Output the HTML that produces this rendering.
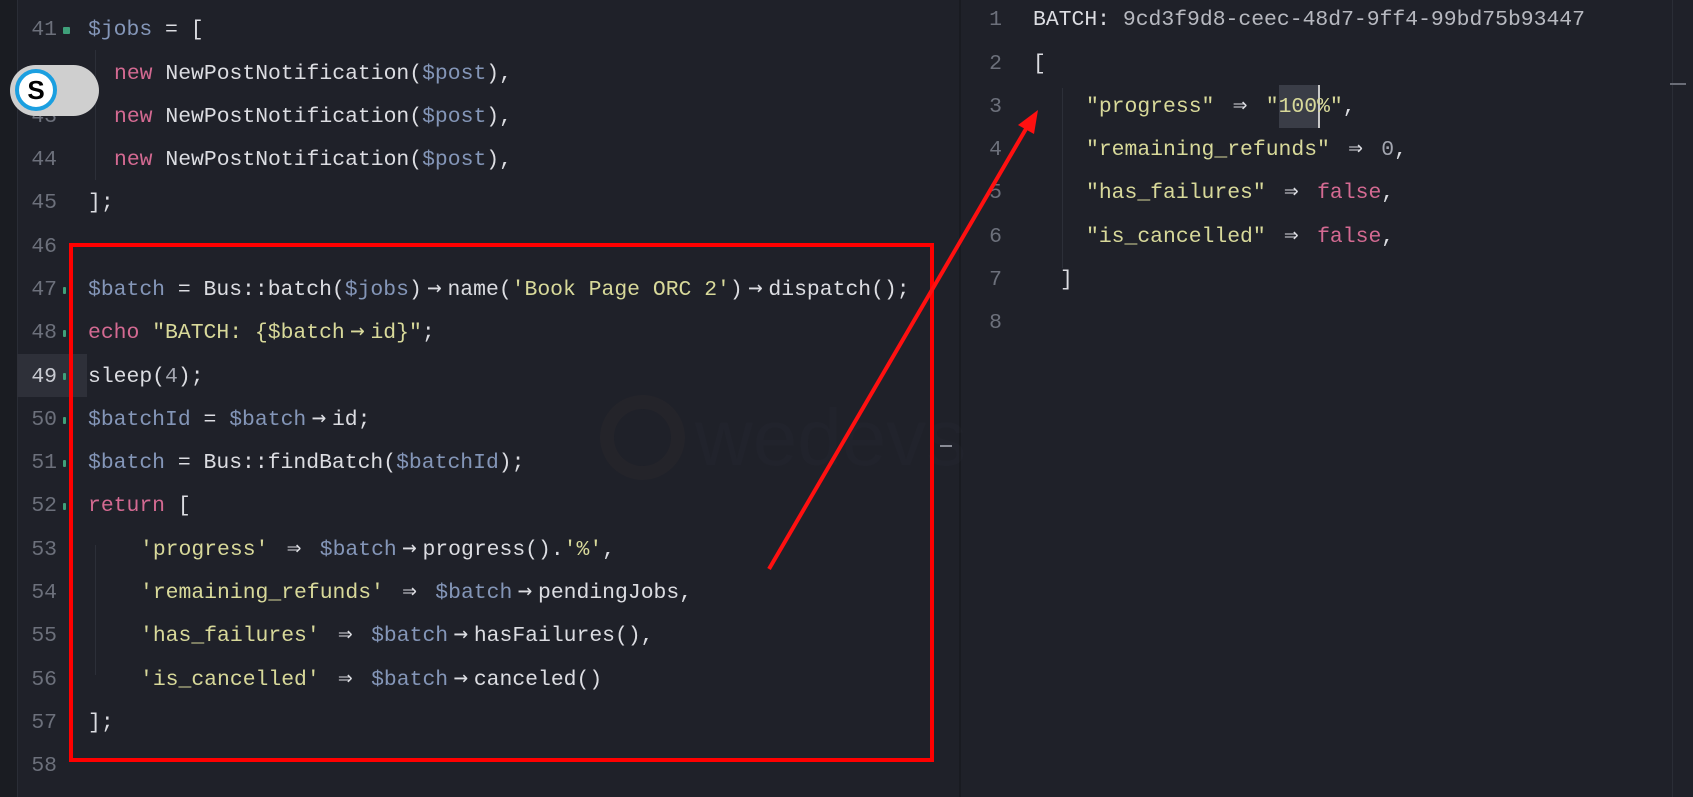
<!DOCTYPE html>
<html><head><meta charset="utf-8"><style>
html,body{margin:0;padding:0;width:1693px;height:797px;overflow:hidden;background:#1f2129;}
body{position:relative;font-family:"Liberation Mono","DejaVu Sans Mono",monospace;font-size:21.4px;color:#dcdde2;}
.strip{position:absolute;left:0;top:0;width:17px;height:797px;background:#1a1c22;border-right:1px solid #2a2d36;}
.pane{position:absolute;top:0;}
.ln{position:absolute;height:43.3px;line-height:43.3px;white-space:pre;}
.num{color:#6c707b;text-align:right;width:40px;}
.v{color:#8496b8}.s{color:#d8d99a}.k{color:#d46a92}.n{color:#a3a6b0}
.a{display:inline-block;width:25.7px;text-align:center;font-family:"DejaVu Sans Mono",monospace;font-size:24px;line-height:20px;}
.g{position:absolute;width:5px;height:7px;background:#3fa07a;border-radius:1px;}
.guide{position:absolute;width:1px;background:#2c2f38;}
</style></head><body>
<div class="strip"></div>
<div style="position:absolute;left:17px;top:354px;width:70px;height:43px;background:#2e3039;"></div>
<div style="position:absolute;left:959px;top:0;width:2px;height:797px;background:#191b21;"></div>
<div style="position:absolute;left:1672px;top:0;width:1px;height:797px;background:#2a2d36;"></div>
<div style="position:absolute;left:1670px;top:83px;width:16px;height:2px;background:#6a6d77;"></div>
<div style="position:absolute;left:940px;top:445px;width:12px;height:2px;background:#8a8d97;"></div>
<div style="position:absolute;left:600px;top:395px;width:85px;height:85px;border-radius:50%;border:14px solid rgba(120,80,70,0.06);box-sizing:border-box;"></div>
<div style="position:absolute;left:695px;top:392px;font-family:'Liberation Sans',sans-serif;font-size:80px;color:rgba(120,110,140,0.035);">wedevs</div>

<div class="guide" style="left:95px;top:50px;height:130px;"></div>
<div class="guide" style="left:95px;top:545px;height:130px;"></div>

<div class="pane" style="left:0;top:9.4px;">
<div class="ln num" style="left:17px;top:0">41</div>
<div class="ln num" style="left:17px;top:43.3px">42</div>
<div class="ln num" style="left:17px;top:86.6px">43</div>
<div class="ln num" style="left:17px;top:130px">44</div>
<div class="ln num" style="left:17px;top:173px">45</div>
<div class="ln num" style="left:17px;top:216.5px">46</div>
<div class="ln num" style="left:17px;top:260px">47</div>
<div class="ln num" style="left:17px;top:303px">48</div>
<div class="ln num" style="left:17px;top:346.5px;color:#c9cbd2">49</div>
<div class="ln num" style="left:17px;top:390px">50</div>
<div class="ln num" style="left:17px;top:433px">51</div>
<div class="ln num" style="left:17px;top:476px">52</div>
<div class="ln num" style="left:17px;top:519.5px">53</div>
<div class="ln num" style="left:17px;top:563px">54</div>
<div class="ln num" style="left:17px;top:606px">55</div>
<div class="ln num" style="left:17px;top:649.5px">56</div>
<div class="ln num" style="left:17px;top:693px">57</div>
<div class="ln num" style="left:17px;top:736px">58</div>

<div class="g" style="left:63px;top:18px;width:7px;height:7px;"></div>
<div class="g" style="left:63px;top:278px;width:3px;"></div>
<div class="g" style="left:63px;top:321px;width:3px;"></div>
<div class="g" style="left:63px;top:364px;width:3px;"></div>
<div class="g" style="left:63px;top:408px;width:3px;"></div>
<div class="g" style="left:63px;top:451px;width:3px;"></div>
<div class="g" style="left:63px;top:494px;width:3px;"></div>

<div class="ln" style="left:88px;top:0"><span class="v">$jobs</span> = [</div>
<div class="ln" style="left:114px;top:43.3px"><span class="k">new</span> NewPostNotification(<span class="v">$post</span>),</div>
<div class="ln" style="left:114px;top:86.6px"><span class="k">new</span> NewPostNotification(<span class="v">$post</span>),</div>
<div class="ln" style="left:114px;top:130px"><span class="k">new</span> NewPostNotification(<span class="v">$post</span>),</div>
<div class="ln" style="left:88px;top:173px">];</div>
<div class="ln" style="left:88px;top:260px"><span class="v">$batch</span> = Bus::batch(<span class="v">$jobs</span>)<span class="a">→</span>name(<span class="s">'Book Page ORC 2'</span>)<span class="a">→</span>dispatch();</div>
<div class="ln" style="left:88px;top:303px"><span class="k">echo</span> <span class="s">"BATCH: {$batch<span class="a">→</span>id}"</span>;</div>
<div class="ln" style="left:88px;top:346.5px">sleep(<span class="n">4</span>);</div>
<div class="ln" style="left:88px;top:390px"><span class="v">$batchId</span> = <span class="v">$batch</span><span class="a">→</span>id;</div>
<div class="ln" style="left:88px;top:433px"><span class="v">$batch</span> = Bus::findBatch(<span class="v">$batchId</span>);</div>
<div class="ln" style="left:88px;top:476px"><span class="k">return</span> [</div>
<div class="ln" style="left:140px;top:519.5px"><span class="s">'progress'</span> <span class="a">⇒</span> <span class="v">$batch</span><span class="a">→</span>progress().<span class="s">'%'</span>,</div>
<div class="ln" style="left:140px;top:563px"><span class="s">'remaining_refunds'</span> <span class="a">⇒</span> <span class="v">$batch</span><span class="a">→</span>pendingJobs,</div>
<div class="ln" style="left:140px;top:606px"><span class="s">'has_failures'</span> <span class="a">⇒</span> <span class="v">$batch</span><span class="a">→</span>hasFailures(),</div>
<div class="ln" style="left:140px;top:649.5px"><span class="s">'is_cancelled'</span> <span class="a">⇒</span> <span class="v">$batch</span><span class="a">→</span>canceled()</div>
<div class="ln" style="left:88px;top:693px">];</div>
</div>

<div class="guide" style="left:1062px;top:88px;height:180px;"></div>
<div style="position:absolute;left:1279px;top:85px;width:41px;height:43px;background:#3a3d47;"></div>
<div style="position:absolute;left:1318px;top:85px;width:2px;height:43px;background:#c8c8c8;"></div>
<div class="pane" style="left:0;top:-0.6px;">
<div class="ln num" style="left:962px;top:0">1</div>
<div class="ln num" style="left:962px;top:43.3px">2</div>
<div class="ln num" style="left:962px;top:86.6px">3</div>
<div class="ln num" style="left:962px;top:130px">4</div>
<div class="ln num" style="left:962px;top:173px">5</div>
<div class="ln num" style="left:962px;top:216.5px">6</div>
<div class="ln num" style="left:962px;top:260px">7</div>
<div class="ln num" style="left:962px;top:303px">8</div>
<div class="ln" style="left:1033px;top:0">BATCH: <span style="color:#b7b9c0">9cd3f9d8-ceec-48d7-9ff4-99bd75b93447</span></div>
<div class="ln" style="left:1033px;top:43.3px">[</div>
<div class="ln" style="left:1086px;top:86.6px"><span class="s">"progress"</span> <span class="a">⇒</span> <span class="s">"100%"</span>,</div>
<div class="ln" style="left:1086px;top:130px"><span class="s">"remaining_refunds"</span> <span class="a">⇒</span> <span class="n">0</span>,</div>
<div class="ln" style="left:1086px;top:173px"><span class="s">"has_failures"</span> <span class="a">⇒</span> <span class="k">false</span>,</div>
<div class="ln" style="left:1086px;top:216.5px"><span class="s">"is_cancelled"</span> <span class="a">⇒</span> <span class="k">false</span>,</div>
<div class="ln" style="left:1060px;top:260px">]</div>
</div>

<div style="position:absolute;left:69px;top:243px;width:865px;height:519px;border:4px solid #ff0000;box-sizing:border-box;"></div>
<svg style="position:absolute;left:0;top:0" width="1693" height="797">
<line x1="769" y1="569" x2="1030" y2="122" stroke="#ff1010" stroke-width="4"/>
<polygon points="1038,110 1018,125 1034,134" fill="#ff1010"/>
</svg>

<div style="position:absolute;left:10px;top:65px;width:89px;height:51px;border-radius:26px;background:#cfcfcf;"></div>
<div style="position:absolute;left:15px;top:69px;width:42px;height:42px;border-radius:50%;background:#fff;border:4px solid #1b9fe0;box-sizing:border-box;font-family:'Liberation Sans',sans-serif;font-weight:bold;font-size:26px;line-height:34px;text-align:center;color:#000;">S</div>
</body></html>
